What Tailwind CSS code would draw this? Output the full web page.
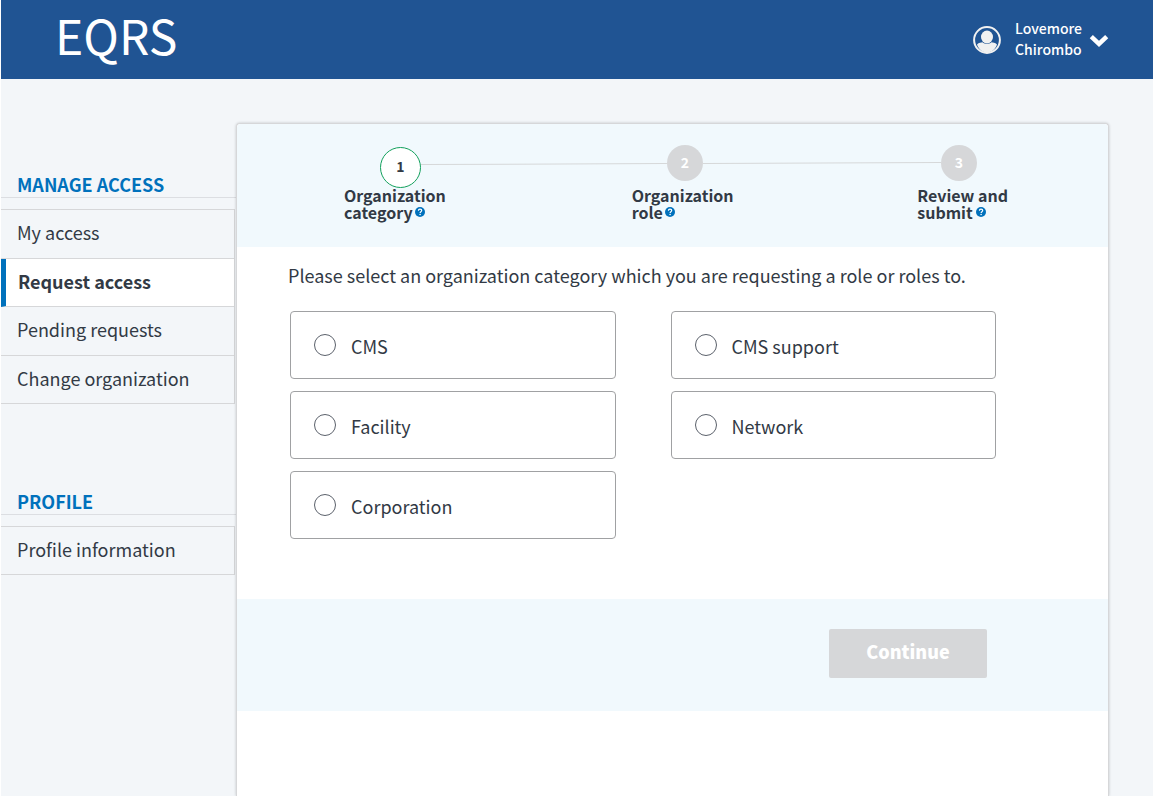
<!DOCTYPE html>
<html lang="en">
<head>
<meta charset="utf-8">
<meta name="viewport" content="width=device-width, initial-scale=1">
<title>EQRS - Request access</title>
<script src="https://cdn.jsdelivr.net/npm/@tailwindcss/browser@4"></script>
</head>
<body class="flex min-h-screen flex-col border-l border-white bg-[#f3f6f9] font-['Noto_Sans_CJK_SC','Noto_Sans',sans-serif] text-[18px] leading-6 text-[#323a45]">
  <svg class="hidden" aria-hidden="true">
    <symbol id="help" viewBox="0 0 10 10">
      <circle cx="5" cy="5" r="5" fill="#0071bc"/>
      <path d="M3.4 3.8C3.4 2.7 4.1 2.2 5 2.2c1 0 1.7.6 1.7 1.4C6.700 4.700 5.100 4.600 5.100 5.900" fill="none" stroke="#fff" stroke-width="1.200"/>
      <circle cx="5.100" cy="7.500" r=".8" fill="#fff"/>
    </symbol>
  </svg>

  <header class="flex h-[79px] shrink-0 items-center justify-between bg-[#205493] pr-11 pl-[54px] text-white">
    <a href="#" class="pb-2.5 text-[48px] leading-[69px]">EQRS</a>
    <button type="button" class="flex items-center text-left">
      <svg class="mr-3.5 size-7" viewBox="0 0 28 28" aria-hidden="true">
        <circle cx="14" cy="14" r="12.900" fill="none" stroke="#f1f1f1" stroke-width="2"/>
        <ellipse cx="14" cy="11" rx="6" ry="6.500" fill="#f1f1f1"/>
        <path d="M4 18.500C6 16.500 8 16.800 9.500 16.300c2.300 2.300 6.700 2.300 9 0 1.500.5 3.500.2 5.500 2.200C22.500 23.500 18 26.500 14 26.500S5.500 23.500 4 18.500Z" fill="#f1f1f1"/>
      </svg>
      <span class="mr-[7px] pb-px text-[14px] leading-[21px] font-medium">Lovemore<br>Chirombo</span>
      <svg class="mt-0.5 w-5" viewBox="0 0 20 14" aria-hidden="true">
        <path d="M2.300 2.700 10 10 17.700 2.700" fill="none" stroke="#fff" stroke-width="4.500"/>
      </svg>
    </button>
  </header>

  <div class="flex grow">
    <nav class="w-[235px] shrink-0 pt-[93px]" aria-label="Account">
      <h2 class="border-b border-[#dcdee2] pl-4 leading-[25px] font-bold text-[#0071bc]">MANAGE ACCESS</h2>
      <ul class="mt-[11px] mr-px border-t border-r border-[#d6d7d9]">
        <li><a href="#" class="flex h-[49px] items-center border-b border-[#d6d7d9] pb-1 pl-4">My access</a></li>
        <li><a href="#" aria-current="page" class="flex h-12 items-center border-b border-l-5 border-b-[#d6d7d9] border-l-[#0071bc] bg-white pb-1 pl-3 font-bold">Request access</a></li>
        <li><a href="#" class="flex h-[49px] items-center border-b border-[#d6d7d9] pb-1 pl-4">Pending requests</a></li>
        <li><a href="#" class="flex h-12 items-center border-b border-[#d6d7d9] pb-1 pl-4">Change organization</a></li>
      </ul>
      <h2 class="mt-[85px] border-b border-[#dcdee2] pl-4 leading-[25px] font-bold text-[#0071bc]">PROFILE</h2>
      <ul class="mt-[11px] mr-px border-t border-r border-[#d6d7d9]">
        <li><a href="#" class="flex h-12 items-center border-b border-[#d6d7d9] pb-1 pl-4">Profile information</a></li>
      </ul>
    </nav>

    <main class="mt-11 mr-11 grow rounded-t border border-b-0 border-[#d6d7d9] bg-white shadow-[0_0_3px_#00000033]">
      <section class="h-[123px] rounded-t bg-[#f1f9fd] pt-[21px]" aria-label="Progress">
        <div class="flex items-center pr-[131px] pl-[143px] text-[14px] font-bold">
          <span class="grid size-[41px] place-items-center rounded-full border border-[#12a05c] bg-white pb-0.5">1</span>
          <svg class="mb-1.5 h-1 w-0 flex-31" viewBox="0 0 100 4" preserveAspectRatio="none" aria-hidden="true"><path d="M0 2.500 100 1.500" stroke="#d6d8d9"/></svg>
          <span class="mb-2 grid size-9 place-items-center rounded-full bg-[#d6d7d9] pb-0.5 text-white">2</span>
          <svg class="mb-2 h-1 w-0 flex-30" viewBox="0 0 100 4" preserveAspectRatio="none" aria-hidden="true"><path d="M0 2.500 100 1.500" stroke="#d6d8d9"/></svg>
          <span class="mb-2 grid size-9 place-items-center rounded-full bg-[#d6d7d9] pb-0.5 text-white">3</span>
        </div>
        <div class="-mt-0.5 flex justify-between pr-[100px] pl-[107px] text-[16px] leading-[17px] font-bold">
          <p class="w-[104px]">Organization<br>category<svg class="ml-0.5 inline size-2.5 align-[2px]" role="img" aria-label="Help"><use href="#help"/></svg></p>
          <p>Organization<br>role<svg class="ml-0.5 inline size-2.5 align-[2px]" role="img" aria-label="Help"><use href="#help"/></svg></p>
          <p>Review and<br>submit <svg class="inline size-2.5 align-[2px]" role="img" aria-label="Help"><use href="#help"/></svg></p>
        </div>
      </section>

      <form>
        <fieldset class="pt-4 pr-[112px] pb-[60px] pl-[51px]">
          <legend class="contents"><span class="block leading-6">Please select an organization category which you are requesting a role or roles to.</span></legend>
          <div class="mt-6 ml-0.5 grid grid-cols-2 gap-x-[55px] gap-y-3">
            <label class="flex h-[68px] items-center gap-[15px] rounded border border-[#a0a1a3] pl-[23px]"><input type="radio" name="category" class="size-[22px] appearance-none rounded-full border border-[#5b616b] checked:border-4"><span class="pt-0.5">CMS</span></label>
            <label class="flex h-[68px] items-center gap-[15px] rounded border border-[#a0a1a3] pl-[23px]"><input type="radio" name="category" class="size-[22px] appearance-none rounded-full border border-[#5b616b] checked:border-4"><span class="pt-0.5">CMS support</span></label>
            <label class="flex h-[68px] items-center gap-[15px] rounded border border-[#a0a1a3] pl-[23px]"><input type="radio" name="category" class="size-[22px] appearance-none rounded-full border border-[#5b616b] checked:border-4"><span class="pt-0.5">Facility</span></label>
            <label class="flex h-[68px] items-center gap-[15px] rounded border border-[#a0a1a3] pl-[23px]"><input type="radio" name="category" class="size-[22px] appearance-none rounded-full border border-[#5b616b] checked:border-4"><span class="pt-0.5">Network</span></label>
            <label class="flex h-[68px] items-center gap-[15px] rounded border border-[#a0a1a3] pl-[23px]"><input type="radio" name="category" class="size-[22px] appearance-none rounded-full border border-[#5b616b] checked:border-4"><span class="pt-0.5">Corporation</span></label>
          </div>
        </fieldset>
        <div class="flex h-28 items-center justify-end bg-[#f1f9fd] pr-[121px] pb-[3px]">
          <button type="submit" disabled class="h-[49px] w-[158px] rounded-xs bg-[#d6d7d9] pb-1.5 font-black text-white">Continue</button>
        </div>
      </form>
    </main>
  </div>
</body>
</html>
